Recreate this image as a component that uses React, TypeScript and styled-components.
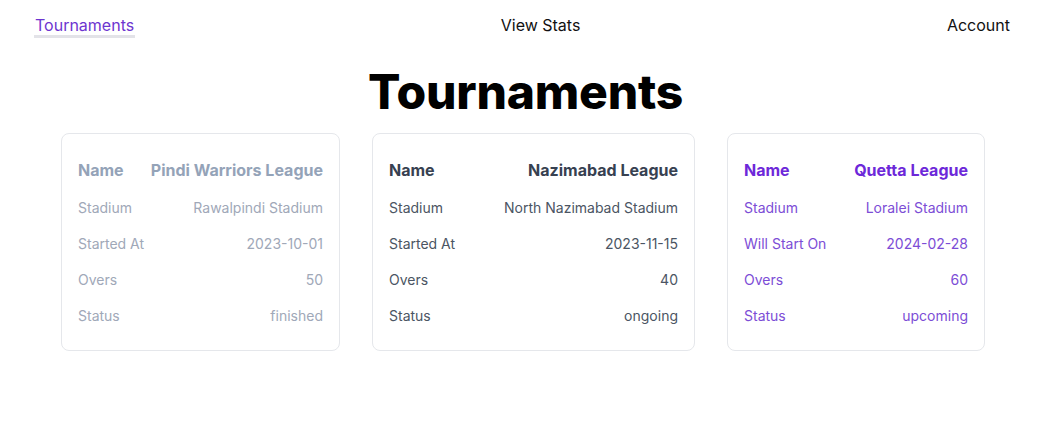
import React from "react";
import styled, { createGlobalStyle } from "styled-components";

const Global = createGlobalStyle`
  html, body { margin: 0; padding: 0; background: #ffffff; }
  body { font-family: Inter, "Noto Sans", sans-serif; color: #111827; }
`;

const Page = styled.div`
  display: flex;
  flex-direction: column;
  align-items: center;
`;

const Nav = styled.nav`
  align-self: stretch;
  display: flex;
  justify-content: space-between;
  align-items: flex-start;
  padding: 15px 40px 0 34px;
  height: 24px;
`;

const NavItem = styled.a<{ $active?: boolean }>`
  font-size: 16px;
  line-height: 20px;
  color: ${(p) => (p.$active ? "#6d35d0" : "#111111")};
  text-decoration: none;
  padding: 0 1px;
  border-bottom: ${(p) => (p.$active ? "3px solid #e3e3e8" : "3px solid transparent")};
  cursor: pointer;
`;

const Title = styled.h1`
  margin: 25px 0 0 0;
  font-size: 48px;
  font-weight: 800;
  line-height: 56px;
  color: #000000;
  letter-spacing: -0.2px;
`;

const Cards = styled.div`
  display: grid;
  grid-template-columns: 279px 323px 258px;
  gap: 32px;
  margin-top: 13px;
  margin-right: 5px;
  align-items: start;
`;

type Tone = "muted" | "dark" | "purple";

const tones: Record<Tone, { strong: string; text: string }> = {
  muted: { strong: "#94a3b8", text: "#a0a8b8" },
  dark: { strong: "#374151", text: "#4b5563" },
  purple: { strong: "#6d28d9", text: "#7c4dd6" },
};

const Card = styled.div`
  border: 1px solid #e5e7eb;
  border-radius: 8px;
  padding: 16px;
  background: #fff;
`;

const Table = styled.table`
  width: 100%;
  border-collapse: collapse;
`;

const Row = styled.tr<{ $tone: Tone; $head?: boolean }>`
  color: ${(p) => (p.$head ? tones[p.$tone].strong : tones[p.$tone].text)};
  font-size: ${(p) => (p.$head ? "16px" : "14px")};
  line-height: ${(p) => (p.$head ? "24px" : "20px")};
  font-weight: ${(p) => (p.$head ? 700 : 400)};
`;

const Label = styled.td`
  padding: 8px 0;
  text-align: left;
  white-space: nowrap;
`;

const Value = styled.td`
  padding: 8px 0;
  text-align: right;
  white-space: nowrap;
`;

type Tournament = {
  name: string;
  stadium: string;
  dateLabel: string;
  date: string;
  overs: number;
  status: string;
  tone: Tone;
};

const data: Tournament[] = [
  { name: "Pindi Warriors League", stadium: "Rawalpindi Stadium", dateLabel: "Started At", date: "2023-10-01", overs: 50, status: "finished", tone: "muted" },
  { name: "Nazimabad League", stadium: "North Nazimabad Stadium", dateLabel: "Started At", date: "2023-11-15", overs: 40, status: "ongoing", tone: "dark" },
  { name: "Quetta League", stadium: "Loralei Stadium", dateLabel: "Will Start On", date: "2024-02-28", overs: 60, status: "upcoming", tone: "purple" },
];

export default function App() {
  return (
    <>
      <Global />
      <Page>
        <Nav>
          <NavItem $active>Tournaments</NavItem>
          <NavItem>View Stats</NavItem>
          <NavItem>Account</NavItem>
        </Nav>
        <Title>Tournaments</Title>
        <Cards>
          {data.map((t) => (
            <Card key={t.name}>
              <Table>
                <tbody>
                  <Row $tone={t.tone} $head>
                    <Label>Name</Label>
                    <Value>{t.name}</Value>
                  </Row>
                  <Row $tone={t.tone}>
                    <Label>Stadium</Label>
                    <Value>{t.stadium}</Value>
                  </Row>
                  <Row $tone={t.tone}>
                    <Label>{t.dateLabel}</Label>
                    <Value>{t.date}</Value>
                  </Row>
                  <Row $tone={t.tone}>
                    <Label>Overs</Label>
                    <Value>{t.overs}</Value>
                  </Row>
                  <Row $tone={t.tone}>
                    <Label>Status</Label>
                    <Value>{t.status}</Value>
                  </Row>
                </tbody>
              </Table>
            </Card>
          ))}
        </Cards>
      </Page>
    </>
  );
}
